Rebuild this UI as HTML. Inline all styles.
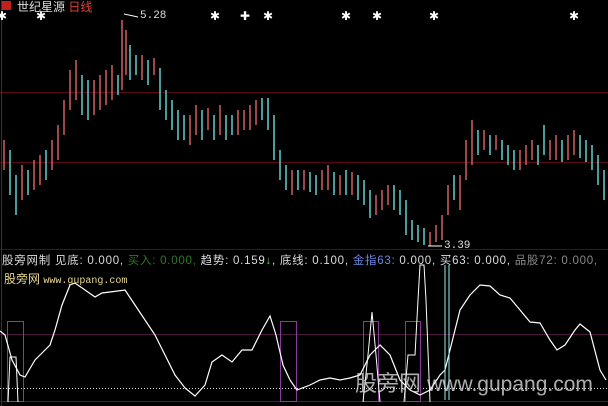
<!DOCTYPE html>
<html><head><meta charset="utf-8"><style>
html,body{margin:0;padding:0;background:#000;width:608px;height:406px;overflow:hidden}
.t{position:absolute;font-family:"Liberation Sans","Noto Sans CJK SC",sans-serif;font-size:12px;white-space:nowrap}
.m{font-family:"Liberation Mono","Noto Sans CJK SC",monospace}
</style></head><body>
<svg width="608" height="406" style="position:absolute;left:0;top:0">
<g stroke="#5a0a14" stroke-width="1">
<line x1="0" y1="92.5" x2="608" y2="92.5"/>
<line x1="0" y1="162.5" x2="608" y2="162.5"/>
<line x1="0" y1="249.5" x2="608" y2="249.5"/>
<line x1="0" y1="334.5" x2="608" y2="334.5" stroke="#4a1838"/>
<line x1="0" y1="401.5" x2="608" y2="401.5" stroke="#4a1838"/>
<line x1="1.5" y1="0" x2="1.5" y2="406" stroke="#8a1010"/>
</g>
<line x1="0" y1="388.5" x2="608" y2="388.5" stroke="#ddd" stroke-dasharray="1,2"/>
<g stroke-width="1.5">
<line x1="4" y1="140" x2="4" y2="170" stroke="#d06060"/>
<line x1="10" y1="150" x2="10" y2="195" stroke="#60d0d0"/>
<line x1="16" y1="175" x2="16" y2="215" stroke="#60d0d0"/>
<line x1="22" y1="165" x2="22" y2="200" stroke="#d06060"/>
<line x1="28" y1="170" x2="28" y2="195" stroke="#60d0d0"/>
<line x1="34" y1="160" x2="34" y2="190" stroke="#d06060"/>
<line x1="40" y1="155" x2="40" y2="185" stroke="#d06060"/>
<line x1="46" y1="150" x2="46" y2="180" stroke="#60d0d0"/>
<line x1="52" y1="140" x2="52" y2="170" stroke="#d06060"/>
<line x1="58" y1="125" x2="58" y2="160" stroke="#d06060"/>
<line x1="64" y1="100" x2="64" y2="135" stroke="#d06060"/>
<line x1="70" y1="70" x2="70" y2="110" stroke="#d06060"/>
<line x1="76" y1="60" x2="76" y2="100" stroke="#d06060"/>
<line x1="82" y1="75" x2="82" y2="115" stroke="#60d0d0"/>
<line x1="88" y1="80" x2="88" y2="120" stroke="#60d0d0"/>
<line x1="94" y1="80" x2="94" y2="115" stroke="#d06060"/>
<line x1="100" y1="75" x2="100" y2="110" stroke="#d06060"/>
<line x1="106" y1="70" x2="106" y2="105" stroke="#d06060"/>
<line x1="112" y1="65" x2="112" y2="100" stroke="#d06060"/>
<line x1="118" y1="75" x2="118" y2="95" stroke="#60d0d0"/>
<line x1="122" y1="20" x2="122" y2="90" stroke="#d06060"/>
<line x1="126" y1="30" x2="126" y2="75" stroke="#d06060"/>
<line x1="130" y1="45" x2="130" y2="80" stroke="#60d0d0"/>
<line x1="136" y1="55" x2="136" y2="75" stroke="#60d0d0"/>
<line x1="142" y1="55" x2="142" y2="80" stroke="#d06060"/>
<line x1="148" y1="60" x2="148" y2="85" stroke="#60d0d0"/>
<line x1="154" y1="58" x2="154" y2="75" stroke="#d06060"/>
<line x1="160" y1="68" x2="160" y2="110" stroke="#60d0d0"/>
<line x1="166" y1="90" x2="166" y2="120" stroke="#60d0d0"/>
<line x1="172" y1="100" x2="172" y2="130" stroke="#60d0d0"/>
<line x1="178" y1="110" x2="178" y2="140" stroke="#60d0d0"/>
<line x1="184" y1="115" x2="184" y2="140" stroke="#60d0d0"/>
<line x1="190" y1="115" x2="190" y2="145" stroke="#d06060"/>
<line x1="196" y1="105" x2="196" y2="135" stroke="#d06060"/>
<line x1="202" y1="110" x2="202" y2="140" stroke="#60d0d0"/>
<line x1="208" y1="108" x2="208" y2="130" stroke="#d06060"/>
<line x1="214" y1="115" x2="214" y2="140" stroke="#60d0d0"/>
<line x1="220" y1="105" x2="220" y2="135" stroke="#d06060"/>
<line x1="226" y1="115" x2="226" y2="140" stroke="#60d0d0"/>
<line x1="232" y1="115" x2="232" y2="135" stroke="#60d0d0"/>
<line x1="238" y1="110" x2="238" y2="135" stroke="#d06060"/>
<line x1="244" y1="110" x2="244" y2="130" stroke="#d06060"/>
<line x1="250" y1="105" x2="250" y2="130" stroke="#d06060"/>
<line x1="256" y1="100" x2="256" y2="125" stroke="#d06060"/>
<line x1="262" y1="98" x2="262" y2="120" stroke="#60d0d0"/>
<line x1="268" y1="98" x2="268" y2="130" stroke="#60d0d0"/>
<line x1="274" y1="115" x2="274" y2="160" stroke="#60d0d0"/>
<line x1="280" y1="150" x2="280" y2="180" stroke="#60d0d0"/>
<line x1="286" y1="165" x2="286" y2="190" stroke="#60d0d0"/>
<line x1="292" y1="170" x2="292" y2="195" stroke="#d06060"/>
<line x1="298" y1="170" x2="298" y2="190" stroke="#60d0d0"/>
<line x1="304" y1="170" x2="304" y2="190" stroke="#d06060"/>
<line x1="310" y1="172" x2="310" y2="192" stroke="#60d0d0"/>
<line x1="316" y1="175" x2="316" y2="195" stroke="#60d0d0"/>
<line x1="322" y1="170" x2="322" y2="190" stroke="#d06060"/>
<line x1="328" y1="165" x2="328" y2="190" stroke="#d06060"/>
<line x1="334" y1="172" x2="334" y2="195" stroke="#60d0d0"/>
<line x1="340" y1="175" x2="340" y2="195" stroke="#d06060"/>
<line x1="346" y1="170" x2="346" y2="195" stroke="#60d0d0"/>
<line x1="352" y1="172" x2="352" y2="195" stroke="#d06060"/>
<line x1="358" y1="175" x2="358" y2="200" stroke="#60d0d0"/>
<line x1="364" y1="180" x2="364" y2="205" stroke="#60d0d0"/>
<line x1="370" y1="190" x2="370" y2="218" stroke="#60d0d0"/>
<line x1="376" y1="195" x2="376" y2="215" stroke="#d06060"/>
<line x1="382" y1="190" x2="382" y2="210" stroke="#d06060"/>
<line x1="388" y1="185" x2="388" y2="205" stroke="#d06060"/>
<line x1="394" y1="185" x2="394" y2="210" stroke="#60d0d0"/>
<line x1="400" y1="190" x2="400" y2="215" stroke="#60d0d0"/>
<line x1="406" y1="200" x2="406" y2="235" stroke="#60d0d0"/>
<line x1="412" y1="220" x2="412" y2="240" stroke="#60d0d0"/>
<line x1="418" y1="225" x2="418" y2="242" stroke="#60d0d0"/>
<line x1="424" y1="228" x2="424" y2="245" stroke="#60d0d0"/>
<line x1="430" y1="232" x2="430" y2="246" stroke="#d06060"/>
<line x1="436" y1="225" x2="436" y2="242" stroke="#d06060"/>
<line x1="442" y1="215" x2="442" y2="240" stroke="#d06060"/>
<line x1="448" y1="185" x2="448" y2="215" stroke="#d06060"/>
<line x1="454" y1="175" x2="454" y2="200" stroke="#60d0d0"/>
<line x1="460" y1="175" x2="460" y2="210" stroke="#d06060"/>
<line x1="466" y1="140" x2="466" y2="180" stroke="#d06060"/>
<line x1="472" y1="120" x2="472" y2="165" stroke="#d06060"/>
<line x1="478" y1="130" x2="478" y2="155" stroke="#60d0d0"/>
<line x1="484" y1="130" x2="484" y2="150" stroke="#d06060"/>
<line x1="490" y1="135" x2="490" y2="155" stroke="#60d0d0"/>
<line x1="496" y1="135" x2="496" y2="150" stroke="#d06060"/>
<line x1="502" y1="140" x2="502" y2="160" stroke="#60d0d0"/>
<line x1="508" y1="145" x2="508" y2="165" stroke="#60d0d0"/>
<line x1="514" y1="150" x2="514" y2="170" stroke="#60d0d0"/>
<line x1="520" y1="150" x2="520" y2="170" stroke="#d06060"/>
<line x1="526" y1="145" x2="526" y2="165" stroke="#d06060"/>
<line x1="532" y1="140" x2="532" y2="160" stroke="#d06060"/>
<line x1="538" y1="145" x2="538" y2="165" stroke="#60d0d0"/>
<line x1="544" y1="125" x2="544" y2="155" stroke="#60d0d0"/>
<line x1="550" y1="140" x2="550" y2="160" stroke="#d06060"/>
<line x1="556" y1="135" x2="556" y2="160" stroke="#d06060"/>
<line x1="562" y1="140" x2="562" y2="162" stroke="#60d0d0"/>
<line x1="568" y1="135" x2="568" y2="160" stroke="#d06060"/>
<line x1="574" y1="130" x2="574" y2="155" stroke="#d06060"/>
<line x1="580" y1="135" x2="580" y2="158" stroke="#60d0d0"/>
<line x1="586" y1="140" x2="586" y2="162" stroke="#60d0d0"/>
<line x1="592" y1="145" x2="592" y2="170" stroke="#60d0d0"/>
<line x1="598" y1="155" x2="598" y2="185" stroke="#60d0d0"/>
<line x1="604" y1="170" x2="604" y2="200" stroke="#60d0d0"/>
</g>
<g fill="none" stroke="#8a3a9a" stroke-width="1">
<rect x="7.5" y="321.5" width="16" height="80"/>
<rect x="280.5" y="321.5" width="16" height="80"/>
<rect x="363.5" y="321.5" width="15" height="80"/>
<rect x="405.5" y="321.5" width="15" height="80"/>
</g>
<polyline fill="none" stroke="#fff" stroke-width="1.2" points="0,331 5,335 12,360 20,375 25,377 35,360 45,350 50,345 55,330 62,305 70,285 75,283 85,290 95,297 102,293 110,292 125,290 135,305 145,320 155,335 165,355 175,375 185,388 195,396 205,385 212,362 222,355 232,362 242,350 252,350 262,330 270,316 276,335 283,365 290,380 297,390 310,385 320,380 330,378 340,380 350,378 360,375 370,355 380,345 390,355 400,380 410,390 420,395 430,390 440,375 445,370 450,350 460,310 470,295 480,285 490,286 500,295 510,298 520,310 530,322 540,323 550,340 557,350 565,345 575,330 580,324 590,332 600,370 606,380"/>
<polyline fill="none" stroke="#fff" stroke-width="1" points="8,402 10,357 16,357 18,402"/>
<polyline fill="none" stroke="#fff" stroke-width="1" points="363,402 368,355 372,312 376,355 380,402"/>
<polyline fill="none" stroke="#fff" stroke-width="1" points="404,402 408,355 415,355 418,300 420,265 424,265 426,300 430,402"/>
<line x1="445" y1="265" x2="445" y2="400" stroke="#9ee" stroke-width="1"/>
<line x1="449" y1="265" x2="449" y2="400" stroke="#9ee" stroke-width="1"/>
<g fill="#fff" font-family="Liberation Sans" font-size="12" text-anchor="middle">
<text x="2" y="20">✱</text><text x="41" y="20">✱</text><text x="215" y="20">✱</text><text x="245" y="20">✚</text><text x="268" y="20">✱</text><text x="346" y="20">✱</text><text x="377" y="20">✱</text><text x="434" y="20">✱</text><text x="574" y="20">✱</text>
</g>
<rect x="2" y="1" width="9" height="9" fill="#c02020"/>
<line x1="124" y1="14" x2="138" y2="17" stroke="#fff"/>
<line x1="428" y1="246" x2="442" y2="246" stroke="#fff"/>
</svg>
<div class="t" style="left:17px;top:-2px;color:#ddd">世纪星源 <span style="color:#e04040">日线</span></div>
<div class="t m" style="left:140px;top:10px;color:#ddd;font-size:11px">5.28</div>
<div class="t m" style="left:444px;top:240px;color:#ddd;font-size:11px">3.39</div>
<div class="t" style="left:2px;top:252px;color:#ddd;font-size:11.5px;letter-spacing:0.75px">股旁网制 见底: 0.000, <span style="color:#2a7a2a">买入: 0.000,</span> 趋势: 0.159<span style="color:#6c6">↓</span>, 底线: 0.100, <span style="color:#6a8ae0">金指63:</span> 0.000, 买63: 0.000, <span style="color:#888">品股72: 0.000,</span></div>
<div class="t" style="left:4px;top:270px;color:#e8d890;font-size:12px">股旁网 <span class="m" style="font-size:10px">www.gupang.com</span></div>
<div class="t" style="left:355px;top:366px;color:rgba(230,230,230,0.75);font-size:22px">股旁网 <span style="font-size:21px">www.gupang.com</span></div>
</body></html>
